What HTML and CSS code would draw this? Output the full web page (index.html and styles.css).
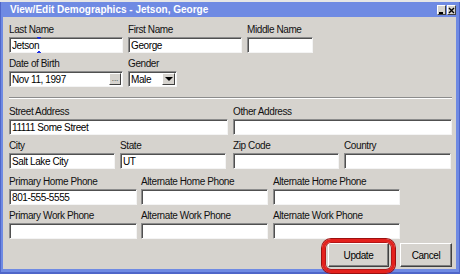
FILE: index.html
```html
<!DOCTYPE html>
<html lang="en">
<head>
    <meta charset="UTF-8">
    <title>View/Edit Demographics</title>
    <link rel="stylesheet" href="styles.css">
</head>
<body>
    <div class="window">
        <div class="titlebar">
            <span class="title">View/Edit Demographics - Jetson, George</span>
            <div class="controls">
                <span class="tbtn">
                    <svg width="7" height="7" viewBox="0 0 7 7"><rect x="1" y="5" width="4" height="2" fill="#000"/></svg>
                </span>
                <span class="tbtn">
                    <svg width="7" height="7" viewBox="0 0 7 7"><path d="M1 1L6 6M6 1L1 6" stroke="#000" stroke-width="1.4"/></svg>
                </span>
            </div>
        </div>

        <div class="content">
            <div class="row">
                <div class="field">
                    <label>Last Name</label>
                    <div class="caret-wrap">
                        <input class="text w114" type="text" value="Jetson">
                        <svg class="ibeam" width="4" height="16" viewBox="0 0 4 16">
                            <rect x="0" y="0" width="4" height="1" fill="#1b2ee8"/>
                            <rect x="1" y="1" width="2" height="1" fill="#1b2ee8"/>
                            <rect x="1" y="14" width="2" height="1" fill="#1b2ee8"/>
                            <rect x="0" y="15" width="4" height="1" fill="#1b2ee8"/>
                        </svg>
                    </div>
                </div>
                <div class="field">
                    <label>First Name</label>
                    <input class="text w114" type="text" value="George">
                </div>
                <div class="field">
                    <label>Middle Name</label>
                    <input class="text w66" type="text" value="">
                </div>
            </div>

            <div class="row mt5">
                <div class="field">
                    <label>Date of Birth</label>
                    <div class="combo w114">
                        <input class="bare" type="text" value="Nov 11, 1997">
                        <span class="dots">...</span>
                    </div>
                </div>
                <div class="field">
                    <label>Gender</label>
                    <div class="combo w49">
                        <span class="choice">Male</span>
                        <span class="arrow"></span>
                    </div>
                </div>
            </div>

            <div class="sep"></div>

            <div class="row">
                <div class="field">
                    <label>Street Address</label>
                    <input class="text w219" type="text" value="11111 Some Street">
                </div>
                <div class="field">
                    <label>Other Address</label>
                    <input class="text w219" type="text" value="">
                </div>
            </div>

            <div class="row mt5">
                <div class="field">
                    <label>City</label>
                    <input class="text w106" type="text" value="Salt Lake City">
                </div>
                <div class="field">
                    <label>State</label>
                    <input class="text w106" type="text" value="UT">
                </div>
                <div class="field ml2">
                    <label>Zip Code</label>
                    <input class="text w106" type="text" value="">
                </div>
                <div class="field">
                    <label>Country</label>
                    <input class="text w107" type="text" value="">
                </div>
            </div>

            <div class="row phones mt7">
                <div class="field">
                    <label>Primary Home Phone</label>
                    <input class="text w128" type="text" value="801-555-5555">
                </div>
                <div class="field">
                    <label>Alternate Home Phone</label>
                    <input class="text w127" type="text" value="">
                </div>
                <div class="field ml1">
                    <label>Alternate Home Phone</label>
                    <input class="text w127" type="text" value="">
                </div>
            </div>

            <div class="row phones mt5">
                <div class="field">
                    <label>Primary Work Phone</label>
                    <input class="text w128" type="text" value="">
                </div>
                <div class="field">
                    <label>Alternate Work Phone</label>
                    <input class="text w127" type="text" value="">
                </div>
                <div class="field ml1">
                    <label>Alternate Work Phone</label>
                    <input class="text w127" type="text" value="">
                </div>
            </div>

            <div class="actions">
                <span class="hl-wrap">
                    <button class="btn update">Update</button>
                    <span class="highlight"></span>
                </span>
                <button class="btn cancel">Cancel</button>
            </div>
        </div>
    </div>
</body>
</html>
```

FILE: styles.css
```css
* {
    box-sizing: border-box;
}
body {
    margin: 0;
    background: #e6e6e6;
    font-family: 'Liberation Sans', Arial, sans-serif;
    font-size: 10px;
    letter-spacing: -0.4px;
    color: #000;
}
.window {
    margin-top: 2px;
    width: 460px;
    height: 272px;
    display: flex;
    flex-direction: column;
    padding: 0 4px 5px 3px;
    background: #6f8ae3;
    box-shadow: inset 1px 0 0 #4f66c9, inset -1px 0 0 #4f66c9, inset 0 -2px 0 #4f66c9;
}
.titlebar {
    height: 15px;
    display: flex;
    align-items: center;
    justify-content: space-between;
    padding-left: 7px;
}
.title {
    color: #fff;
    font-weight: bold;
    letter-spacing: 0;
}
.controls {
    display: flex;
    gap: 1px;
    margin-top: 1px;
}
.tbtn {
    width: 9px;
    height: 10px;
    display: flex;
    align-items: center;
    justify-content: center;
    background: #d6d3ce;
    border: 1px solid;
    border-color: #fff #404040 #404040 #fff;
}
.content {
    flex: 1;
    background: #d6d3ce;
    padding: 7px 4px 2px 6px;
}
.row {
    display: flex;
    gap: 5px;
}
.phones {
    gap: 4px;
}
.mt5 { margin-top: 5px; }
.mt7 { margin-top: 7px; }
.ml1 { margin-left: 1px; }
.ml2 { margin-left: 2px; }
.field label {
    display: block;
    height: 12px;
    line-height: 12px;
    margin-bottom: 1px;
    color: #111;
}
.text, .combo {
    display: block;
    height: 16px;
    margin: 0;
    padding: 0 2px;
    border: 1px solid;
    border-color: #8c8c8c #f4f4f4 #f4f4f4 #8c8c8c;
    box-shadow: inset 1px 1px 0 #505050;
    background: #fff;
    font: inherit;
    letter-spacing: inherit;
    color: #000;
    outline: none;
}
.w49 { width: 49px; }
.w66 { width: 66px; }
.w106 { width: 106px; }
.w107 { width: 107px; }
.w114 { width: 114px; }
.w127 { width: 127px; }
.w128 { width: 128px; }
.w219 { width: 219px; }
.caret-wrap {
    position: relative;
}
.ibeam {
    position: absolute;
    left: 28px;
    top: 0;
}
.combo {
    display: flex;
    align-items: center;
    padding: 0 1px 0 2px;
}
.bare {
    flex: 1;
    min-width: 0;
    height: 14px;
    border: 0;
    padding: 0;
    background: transparent;
    font: inherit;
    letter-spacing: inherit;
    outline: none;
}
.choice {
    flex: 1;
}
.dots, .arrow {
    width: 12px;
    height: 12px;
    display: flex;
    align-items: center;
    justify-content: center;
    background: #d6d3ce;
    border: 1px solid;
    border-color: #fff #404040 #404040 #fff;
    font-size: 8px;
    letter-spacing: 0;
    line-height: 6px;
    color: #333;
}
.arrow {
    width: 13px;
}
.arrow::after {
    content: '';
    border-left: 4px solid transparent;
    border-right: 4px solid transparent;
    border-top: 4px solid #000;
}
.sep {
    height: 2px;
    margin: 10px 0 7px;
    border-top: 1px solid #8c8c8c;
    border-bottom: 1px solid #fff;
}
.actions {
    display: flex;
    justify-content: flex-end;
    gap: 11px;
    margin-top: 4px;
}
.btn {
    height: 24px;
    padding: 0;
    border: 1px solid;
    border-color: #fff #404040 #404040 #fff;
    box-shadow: inset -1px -1px 0 #808080;
    background: #d6d3ce;
    font: inherit;
    letter-spacing: inherit;
    color: #000;
}
.update { width: 61px; }
.cancel { width: 52px; }
.hl-wrap {
    position: relative;
    display: flex;
}
.highlight {
    position: absolute;
    top: -4px;
    left: -6px;
    right: -6px;
    bottom: -6px;
    border: 3px solid #e4211d;
    border-radius: 9px;
    box-shadow: 0 0 0 1px #9c1010, inset 0 0 0 1px #b51515;
    pointer-events: none;
}
```
